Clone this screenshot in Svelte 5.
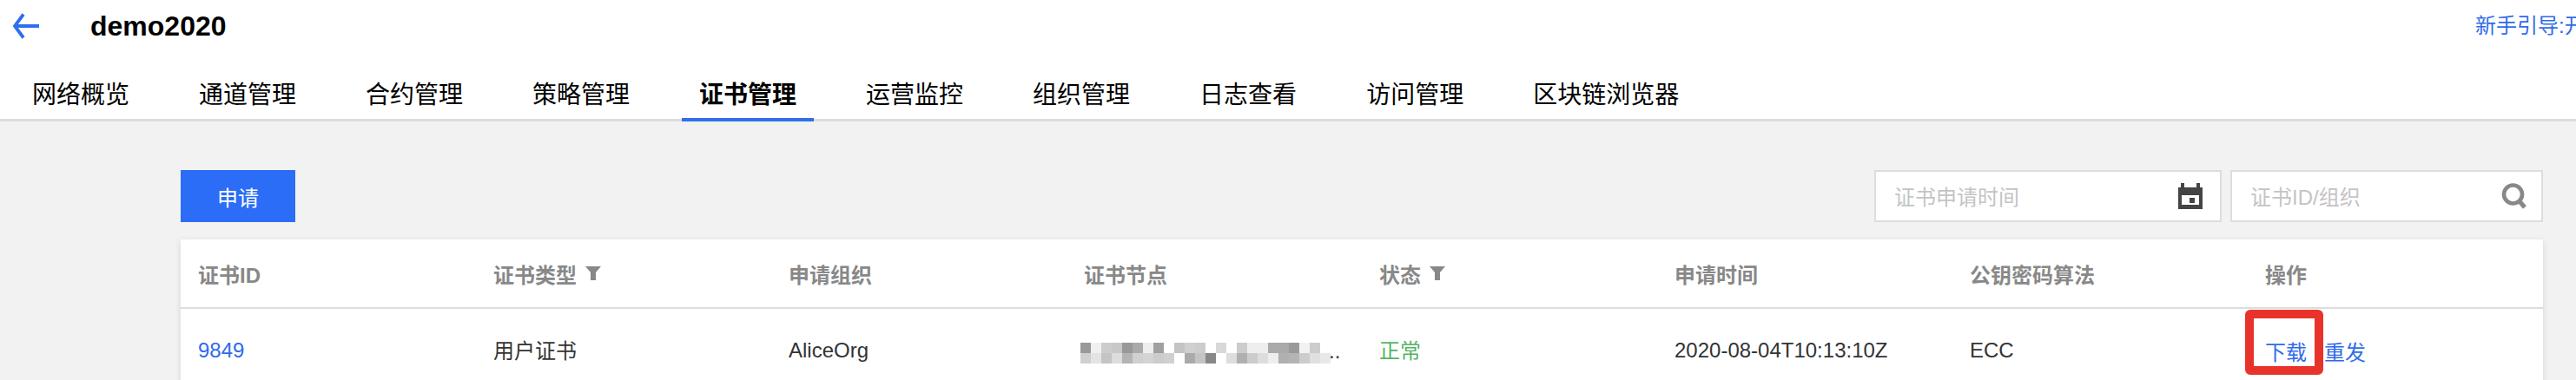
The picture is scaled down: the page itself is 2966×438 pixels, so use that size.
<script>
	const tabs = ['网络概览', '通道管理', '合约管理', '策略管理', '证书管理', '运营监控', '组织管理', '日志查看', '访问管理', '区块链浏览器'];
	const active_tab = '证书管理';

	const columns = [
		{ label: '证书ID' },
		{ label: '证书类型', filter: true },
		{ label: '申请组织' },
		{ label: '证书节点' },
		{ label: '状态', filter: true },
		{ label: '申请时间' },
		{ label: '公钥密码算法' },
		{ label: '操作' }
	];

	// the node name is pixelated in the screenshot, one value per 12px cell
	const blur_top = ['#999', '#f0f0f0', '#ccc', '#c8c8c8', '#999', '#aaa', '#eee', '#a0a0a0', '#fff', '#c4c4c4', '#d0d0d0', '#ccc', '#fff', '#d8d8d8', '#fff', '#ccc', '#eee', '#eee', '#aaa', '#aaa', '#999', '#f2f2f2', '#ccc', '#fff'];
	const blur_bottom = ['#d0d0d0', '#e4e4e4', '#c4c4c4', '#ddd', '#b4b4b4', '#d0d0d0', '#d4d4d4', '#ccc', '#d0d0d0', '#fff', '#aaa', '#c4c4c4', '#888', '#fff', '#ddd', '#b0b0b0', '#ccc', '#ddd', '#eee', '#b0b0b0', '#b4b4b4', '#ccc', '#e0e0e0', '#e8e8e8'];
</script>

{#snippet funnel()}
	<svg class="funnel" width="18" height="18" viewBox="0 0 18 18" aria-hidden="true">
		<path d="M0 1H18L12 8V17H6V8Z" fill="#888" />
	</svg>
{/snippet}

<div class="page">
	<header class="topbar">
		<svg class="back" width="30" height="30" viewBox="0 0 30 30" aria-hidden="true">
			<path d="M30 15H3M12 1.5L2 15L12 28.5" fill="none" stroke="#2f6fed" stroke-width="3.8" />
		</svg>
		<h1 class="title">demo2020</h1>
		<a class="guide" href="#guide">新手引导:开启</a>
	</header>

	<nav class="tabs">
		{#each tabs as tab}
			<span class="tab" class:active={tab === active_tab}>{tab}</span>
		{/each}
	</nav>

	<main class="content">
		<div class="toolbar">
			<button class="primary">申请</button>
			<div class="filters">
				<div class="field date">
					<span class="placeholder">证书申请时间</span>
					<svg width="28" height="30" viewBox="0 0 28 30" aria-hidden="true">
						<path d="M3 0H7V5H21V0H25V5H28V30H0V5H3ZM4 14V25H24V14Z" fill="#444" />
						<rect x="13" y="17" width="6" height="6" fill="#444" />
					</svg>
				</div>
				<div class="field search">
					<span class="placeholder">证书ID/组织</span>
					<svg width="30" height="30" viewBox="0 0 30 30" aria-hidden="true">
						<circle cx="13.5" cy="13" r="10.5" fill="none" stroke="#888" stroke-width="4.6" />
						<path d="M20 20L27 28" stroke="#888" stroke-width="5" />
					</svg>
				</div>
			</div>
		</div>

		<section class="table">
			<div class="row head">
				{#each columns as col}
					<div class="cell">
						{col.label}
						{#if col.filter}{@render funnel()}{/if}
					</div>
				{/each}
			</div>
			<div class="row body">
				<div class="cell"><a href="#cert">9849</a></div>
				<div class="cell cjk">用户证书</div>
				<div class="cell">AliceOrg</div>
				<div class="cell node">
					<div class="blur" aria-hidden="true">
						{#each blur_top as color}<i style:background={color}></i>{/each}
						{#each blur_bottom as color}<i style:background={color}></i>{/each}
					</div>
					<span class="more">..</span>
				</div>
				<div class="cell cjk ok">正常</div>
				<div class="cell">2020-08-04T10:13:10Z</div>
				<div class="cell">ECC</div>
				<div class="cell actions">
					<a class="marked" href="#download">下载</a>
					<a href="#reissue">重发</a>
				</div>
			</div>
		</section>
	</main>
</div>

<style>
	:global(body) {
		background: #f2f2f2;
		overflow: hidden;
	}

	.page {
		width: 2966px;
		height: 438px;
		overflow: hidden;
		background: #f2f2f2;
		font-family: 'Liberation Sans', 'Noto Sans CJK SC', sans-serif;
		font-size: 24px;
		color: #333;
	}

	a {
		color: #2f6bea;
		text-decoration: none;
	}

	.topbar {
		height: 60px;
		display: flex;
		align-items: center;
		padding-left: 15px;
		background: #fff;
	}

	.back {
		flex: none;
	}

	.title {
		flex: 1;
		margin: 0 0 0 59px;
		font-size: 32px;
		font-weight: 700;
		color: #000;
	}

	.guide {
		flex: none;
		width: 116px;
		padding-bottom: 5px;
		overflow: hidden;
		white-space: nowrap;
	}

	.tabs {
		height: 80px;
		box-sizing: border-box;
		display: flex;
		gap: 40px;
		padding-left: 17px;
		background: #fff;
		border-bottom: 3px solid #ddd;
	}

	.tab {
		height: 80px;
		box-sizing: border-box;
		padding: 24px 20px 0;
		font-size: 28px;
		line-height: 52px;
		color: #000;
		white-space: nowrap;
	}

	.tab.active {
		font-weight: 700;
		border-bottom: 4px solid #2f6fed;
	}

	.content {
		padding: 56px 38px 0 208px;
	}

	.toolbar {
		display: flex;
		justify-content: space-between;
		height: 60px;
		margin-bottom: 20px;
	}

	.primary {
		width: 132px;
		height: 60px;
		border: 0;
		padding: 0;
		background: #2b6df6;
		color: #fff;
		font: inherit;
	}

	.filters {
		display: flex;
		gap: 10px;
	}

	.field {
		height: 60px;
		box-sizing: border-box;
		display: flex;
		align-items: center;
		justify-content: space-between;
		padding: 0 16px 0 21px;
		background: #fff;
		border: 2px solid #ddd;
	}

	.field.date {
		width: 400px;
		padding-right: 20px;
	}

	.field.search {
		width: 360px;
	}

	.placeholder {
		padding-bottom: 2px;
		color: #c4c4c4;
	}

	.table {
		background: #fff;
		box-shadow: 0 2px 8px rgba(0, 0, 0, 0.12);
	}

	.row {
		display: grid;
		grid-template-columns: repeat(8, 340px);
		align-items: center;
	}

	.row.head {
		height: 80px;
		box-sizing: border-box;
		border-bottom: 2px solid #ddd;
		font-weight: 700;
		color: #888;
	}

	.row.body {
		height: 96px;
	}

	.cell {
		padding: 0 20px;
		display: flex;
		align-items: center;
		white-space: nowrap;
	}

	.cell.cjk {
		padding-bottom: 4px;
	}

	.funnel {
		margin-left: 10px;
	}

	.node {
		padding-left: 16px;
		padding-top: 4px;
		align-items: flex-end;
	}

	.blur {
		display: grid;
		grid-template-columns: repeat(24, 12px);
		grid-auto-rows: 12px;
	}

	.blur i {
		display: block;
	}

	.more {
		line-height: 24px;
		margin-left: -2px;
		margin-bottom: 2px;
		color: #333;
	}

	.ok {
		color: #55b464;
	}

	.actions {
		gap: 20px;
	}

	.marked {
		position: relative;
	}

	.marked::after {
		content: '';
		position: absolute;
		left: -23px;
		top: -30px;
		width: 90px;
		height: 75px;
		box-sizing: border-box;
		border: 10px solid #e8332a;
		border-radius: 6px;
	}
</style>
